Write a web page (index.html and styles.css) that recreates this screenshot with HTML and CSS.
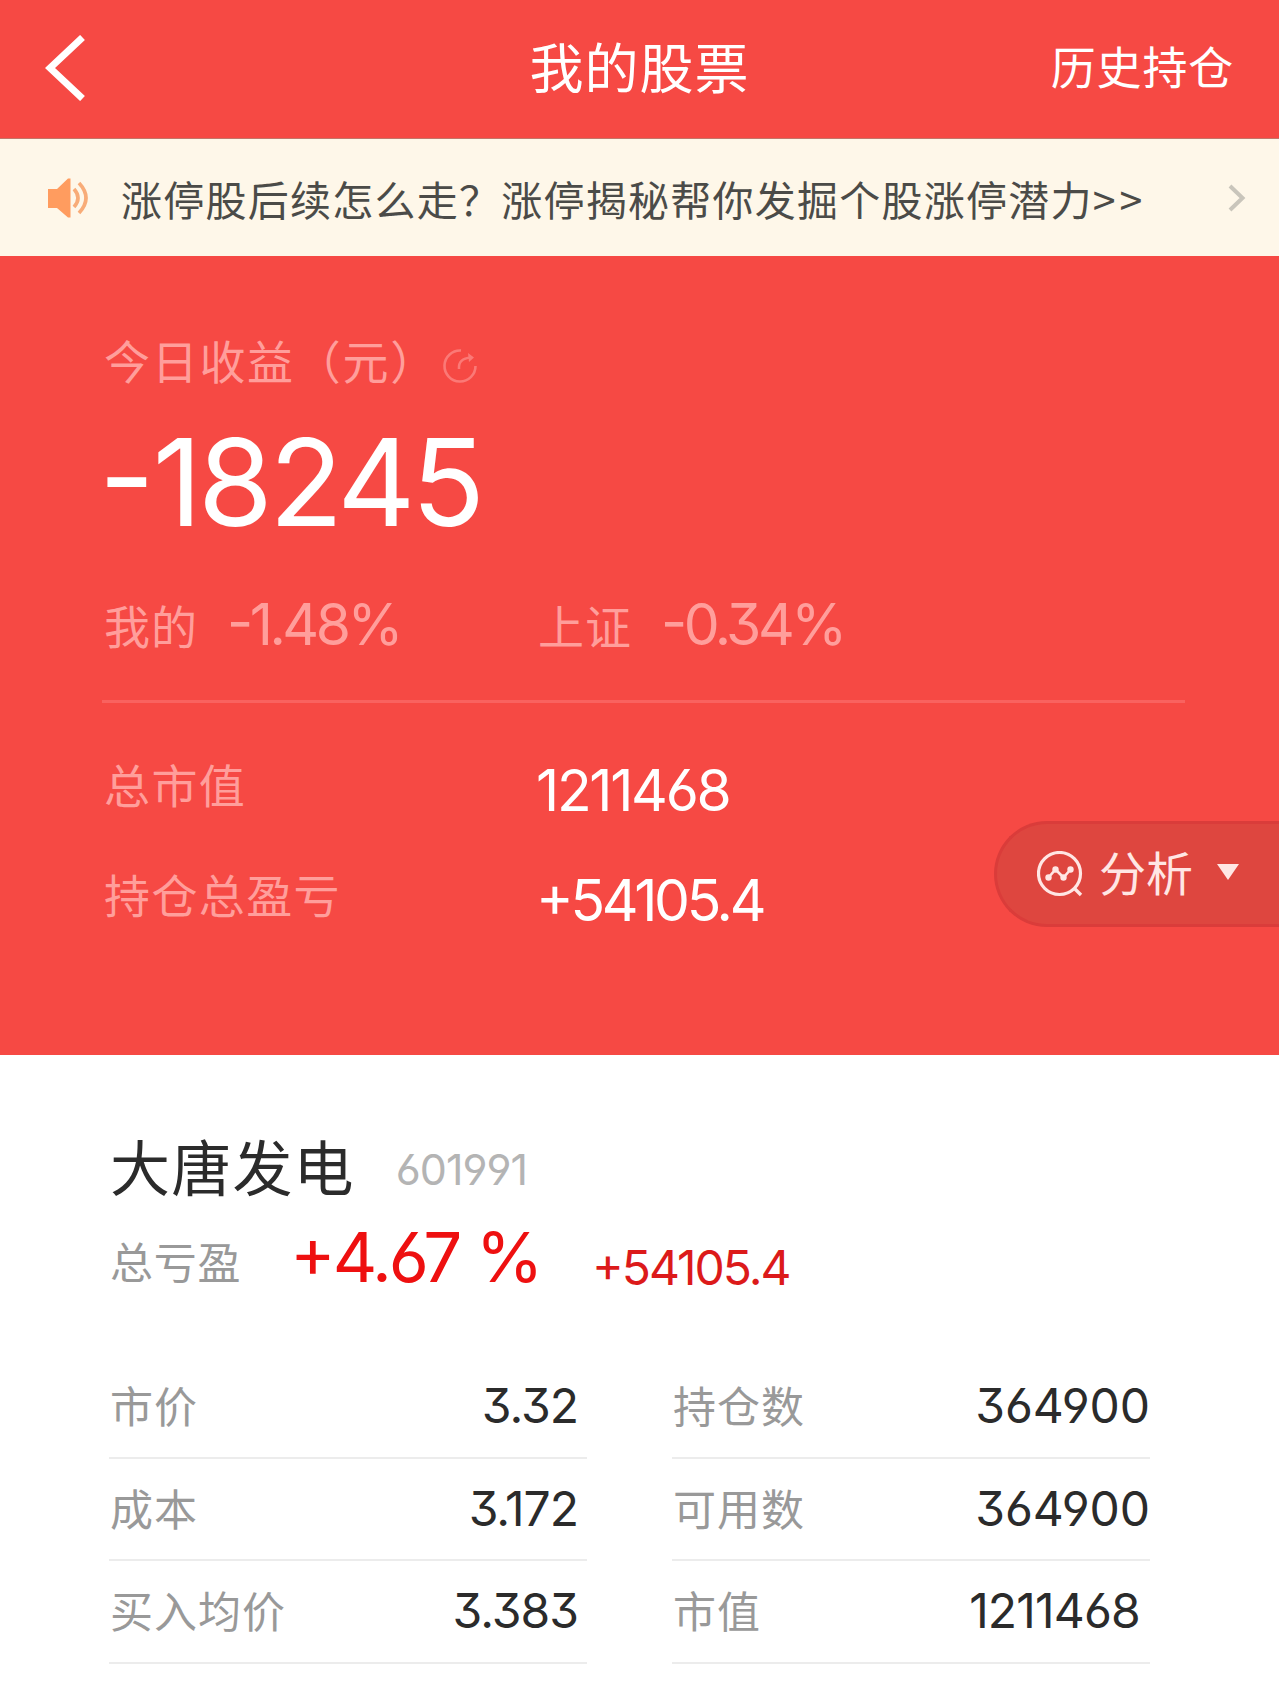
FILE: index.html
```html
<!DOCTYPE html>
<html lang="zh-CN">
<head>
  <meta charset="UTF-8" />
  <meta name="viewport" content="width=device-width, initial-scale=1.0" />
  <title>我的股票</title>
  <link rel="stylesheet" href="styles.css">
</head>
<body>
  <header class="header">
    <svg class="back" width="41" height="66" viewBox="0 0 41 66">
      <path d="M37.500 2.500 L5 33 L37.500 63.500" fill="none" stroke="#fff" stroke-width="7"/>
    </svg>
    <h1>我的股票</h1>
    <span class="history">历史持仓</span>
  </header>

  <div class="notice">
    <svg class="speaker" width="40" height="40" viewBox="0 0 40 40">
      <path d="M0 11 H9 L20 0.5 H22.500 V39.500 H20 L9 30 H0 Z" fill="#ff9c5f"/>
      <path d="M26 11 Q34 20 26 29 M31 5 Q45 20 31 35" fill="none" stroke="#f8ac78" stroke-width="3.600"/>
    </svg>
    <span class="notice-text">涨停股后续怎么走？涨停揭秘帮你发掘个股涨停潜力<span class="more">&gt;&gt;</span></span>
    <svg class="arrow" width="18" height="28" viewBox="0 0 18 28">
      <path d="M2 2 L14.500 14 L2 26" fill="none" stroke="#c9c5bb" stroke-width="4"/>
    </svg>
  </div>

  <section class="summary">
    <div class="today">
      <span>今日收益（元）</span>
      <svg width="36" height="36" viewBox="0 0 36 36">
        <path d="M19 2.500 A15.500 15.500 0 1 0 33.500 18" fill="none" stroke="#fb7976" stroke-width="2.600"/>
        <path d="M17 21 Q16 10.500 29 9.500" fill="none" stroke="#fb7976" stroke-width="2.600"/>
        <path d="M26 5 L32 9.500 L27 14 Z" fill="#fb7976"/>
      </svg>
    </div>
    <div class="num profit"><span class="sign">-</span>18245</div>
    <div class="compare">
      <div class="item">
        <span>我的</span>
        <span class="num">-1.48%</span>
      </div>
      <div class="item">
        <span>上证</span>
        <span class="num">-0.34%</span>
      </div>
    </div>
    <div class="total">
      <span class="label">总市值</span>
      <span class="num market">1211468</span>
    </div>
    <div class="total">
      <span class="label">持仓总盈亏</span>
      <span class="num gain">+54105.4</span>
    </div>
    <div class="analysis">
      <svg width="46" height="46" viewBox="0 0 46 46">
        <circle cx="22.500" cy="22.500" r="21" fill="none" stroke="#ffe6e4" stroke-width="3.200"/>
        <path d="M37 37 L44 44" stroke="#ffe6e4" stroke-width="3.400"/>
        <path d="M11.500 26.500 L18.500 18.500 L26.500 26.500 L33.500 18.500" fill="none" stroke="#ffe6e4" stroke-width="2.600"/>
        <g fill="#ffe6e4">
          <circle cx="11.500" cy="26.500" r="3.200"/>
          <circle cx="18.500" cy="18.500" r="3.200"/>
          <circle cx="26.500" cy="26.500" r="3.200"/>
          <circle cx="33.500" cy="18.500" r="3.200"/>
        </g>
      </svg>
      <span>分析</span>
      <i class="triangle"></i>
    </div>
  </section>

  <section class="stock">
    <div class="name">
      <h2>大唐发电</h2>
      <span class="num code">601991</span>
    </div>
    <div class="result">
      <span class="label">总亏盈</span>
      <span class="num rate">+4.67 %</span>
      <span class="num amount">+54105.4</span>
    </div>
    <div class="table">
      <div class="cell"><span>市价</span><span class="num">3.32</span></div>
      <div class="cell"><span>持仓数</span><span class="num">364900</span></div>
      <div class="cell"><span>成本</span><span class="num">3.172</span></div>
      <div class="cell"><span>可用数</span><span class="num">364900</span></div>
      <div class="cell"><span>买入均价</span><span class="num">3.383</span></div>
      <div class="cell"><span>市值</span><span class="num value">1211468</span></div>
    </div>
  </section>
</body>
</html>
```
FILE: styles.css
```css
* {
  box-sizing: border-box;
}

body {
  margin: 0;
  height: 1683px;
  font-family: 'Noto Sans CJK SC', sans-serif;
  background-color: #fff;
  overflow: hidden;
}

h1, h2 {
  margin: 0;
  font-weight: normal;
}

.num {
  font-family: Inter, 'Noto Sans CJK SC', sans-serif;
  font-feature-settings: 'cv03', 'cv04', 'cv09', 'case';
  white-space: pre;
}

.header {
  display: grid;
  grid-template-columns: 1fr auto 1fr;
  align-items: center;
  height: 138px;
  padding: 0 45px 6px;
  background-color: #f64944;
  color: #fff;
}

.header h1 {
  font-size: 54px;
  line-height: 80px;
  letter-spacing: 1px;
}

.back {
  margin-top: 3px;
}

.history {
  justify-self: end;
  font-size: 45px;
  line-height: 60px;
  letter-spacing: 0.8px;
}

.notice {
  display: flex;
  align-items: center;
  height: 118px;
  padding: 0 33px 0 48px;
  border-top: 1px solid #c3766a;
  background-color: #fef7e9;
  color: #4b4b48;
  font-size: 41px;
}

.notice-text {
  flex: 1;
  margin-left: 33px;
  line-height: 60px;
  letter-spacing: 1.25px;
  white-space: nowrap;
}

.more {
  letter-spacing: 4px;
}

.summary {
  position: relative;
  height: 799px;
  padding: 73px 94px 0 102px;
  background-color: #f64944;
  color: #ff9e9b;
  font-size: 46px;
  line-height: 60px;
}

.today {
  display: flex;
  align-items: center;
  height: 60px;
  padding-left: 2px;
  letter-spacing: 1.7px;
}

.today svg {
  margin: 14px 0 0 4px;
}

.profit {
  margin: 33px 0 0 -3px;
  color: #fff;
  font-size: 121px;
  line-height: 120px;
  letter-spacing: -3.8px;
}

.sign {
  letter-spacing: -2px;
}

.compare {
  display: flex;
  height: 109px;
  margin-top: 52px;
  border-bottom: 3px solid #f9625f;
}

.item {
  display: flex;
  gap: 29px;
  width: 434px;
  height: 60px;
  padding-left: 2px;
  letter-spacing: 1px;
}

.item .num {
  padding-top: 1px;
  font-size: 57px;
  letter-spacing: -3.5px;
}

.total {
  display: flex;
  align-items: center;
  height: 60px;
  margin-top: 50px;
}

.compare + .total {
  margin-top: 58px;
}

.total .label {
  width: 434px;
  padding: 0 0 17px 2px;
  letter-spacing: 1.4px;
}

.total .num {
  color: #fff;
  font-size: 57px;
}

.market {
  letter-spacing: -2.3px;
}

.gain {
  letter-spacing: -3.3px;
}

.analysis {
  position: absolute;
  top: 565px;
  right: 0;
  display: flex;
  align-items: center;
  width: 285px;
  height: 106px;
  padding-left: 40px;
  border: 3px solid #da3c3a;
  border-right: 0;
  border-radius: 53px 0 0 53px;
  background-color: #de463f;
  color: #ffe6e4;
  font-size: 47px;
}

.analysis span {
  margin: -6px 0 0 16px;
}

.triangle {
  margin: -4px 0 0 24px;
  border: 11px solid transparent;
  border-top: 16px solid #ffe6e4;
  border-bottom: 0;
}

.stock {
  padding: 75px 129px 0 109px;
}

.name {
  display: flex;
  align-items: center;
  height: 70px;
  padding-left: 1px;
}

.name h2 {
  color: #2b2b2b;
  font-size: 60px;
  line-height: 70px;
  letter-spacing: 1.2px;
}

.code {
  margin: 8px 0 0 41px;
  color: #b4b4b4;
  font-size: 43px;
  letter-spacing: -1px;
}

.result {
  display: flex;
  align-items: center;
  height: 80px;
  margin-top: 17px;
  padding-left: 1px;
}

.result .label {
  width: 180px;
  padding-top: 5px;
  color: #999;
  font-size: 43px;
  line-height: 60px;
  letter-spacing: 0.7px;
}

.rate {
  width: 302px;
  color: #ee1010;
  font-size: 69px;
  letter-spacing: -3px;
}

.amount {
  margin-top: 20px;
  color: #dc1a1a;
  font-size: 48px;
  letter-spacing: -2px;
}

.table {
  display: grid;
  grid-template-columns: 478px 478px;
  column-gap: 85px;
  margin-top: 59px;
}

.cell {
  display: flex;
  justify-content: space-between;
  align-items: center;
  height: 102.5px;
  padding: 0 9px 0 1px;
  border-bottom: 2px solid #ececec;
  color: #999;
  font-size: 43px;
  line-height: 60px;
  letter-spacing: 1px;
}

.cell span:first-child {
  padding-bottom: 4px;
}

.cell .num {
  color: #2b2b2b;
  font-size: 48px;
  letter-spacing: -1px;
}

.cell:nth-child(even) {
  padding-right: 0;
}

.cell:nth-child(even) .num {
  letter-spacing: -0.1px;
}

.cell:nth-child(even) .value {
  margin-right: 10px;
  letter-spacing: -0.8px;
}
```
